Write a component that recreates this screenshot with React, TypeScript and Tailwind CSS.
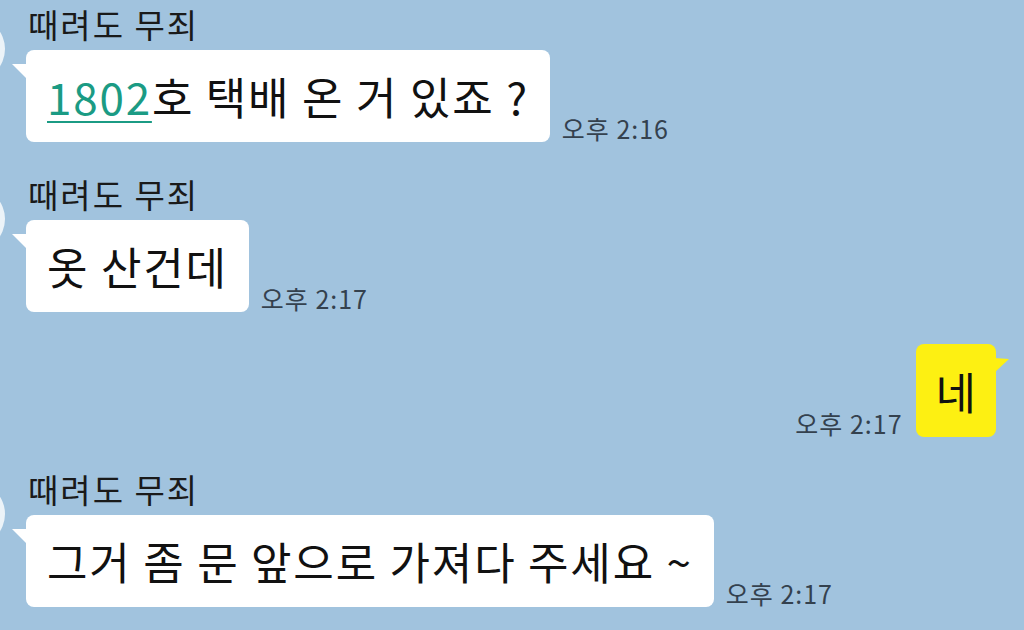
import type { ReactNode } from 'react'

const FONT = { fontFamily: '"Noto Sans CJK KR", "Noto Sans", sans-serif' }

function Time({ text }: { text: string }) {
  return <span className="text-[25px] leading-[28px] tracking-[1px] text-[#34414e] whitespace-nowrap">{text}</span>
}

function LeftTail() {
  return (
    <svg width="16" height="18" viewBox="0 0 16 18" className="shrink-0 mt-[13px] -mr-[2px]">
      <path d="M0 1 L16 1 L16 17 Z" fill="#ffffff" />
    </svg>
  )
}

function RightTail() {
  return (
    <svg width="16" height="16" viewBox="0 0 16 16" className="shrink-0 mt-[14px] -ml-[2px]">
      <path d="M0 0 L15 1 L0 15 Z" fill="#fdf012" />
    </svg>
  )
}

function Received({ name, time, children }: { name: string; time: string; children: ReactNode }) {
  return (
    <div className="flex items-start">
      <div className="w-[64px] h-[64px] rounded-full bg-white/80 -ml-[59px] mt-[17px] shrink-0" />
      <div className="flex flex-col ml-[7px]">
        <div className="ml-[16px] text-[33px] leading-[48px] tracking-[2px] text-[#1a1a1a]">{name}</div>
        <div className="flex items-start mt-[2px]">
          <LeftTail />
          <div className="flex items-end gap-[12px]">
            <div className="bg-white rounded-[8px] h-[92px] px-[21px] flex items-center text-[44px] tracking-[1.8px] text-[#111] whitespace-nowrap">
              {children}
            </div>
            <Time text={time} />
          </div>
        </div>
      </div>
    </div>
  )
}

function Sent({ time, children }: { time: string; children: ReactNode }) {
  return (
    <div className="flex justify-end items-start pr-[14px]">
      <div className="flex items-end gap-[13px]">
        <Time text={time} />
        <div className="bg-[#fdf012] rounded-[8px] h-[93px] px-[20px] flex items-center text-[44px] text-[#111]">
          {children}
        </div>
      </div>
      <RightTail />
    </div>
  )
}

export default function App() {
  return (
    <div className="w-[1024px] h-[630px] overflow-hidden bg-[#a1c3de] flex flex-col gap-[28px]" style={FONT}>
      <Received name="때려도 무죄" time="오후 2:16">
        <span className="text-[#1b9b84] underline decoration-2 underline-offset-[6px]">1802</span>호 택배 온 거 있죠 ?
      </Received>
      <Received name="때려도 무죄" time="오후 2:17">
        옷 산건데
      </Received>
      <div className="mt-[4px]">
        <Sent time="오후 2:17">네</Sent>
      </div>
      <Received name="때려도 무죄" time="오후 2:17">
        그거 좀 문 앞으로 가져다 주세요 ~
      </Received>
    </div>
  )
}
